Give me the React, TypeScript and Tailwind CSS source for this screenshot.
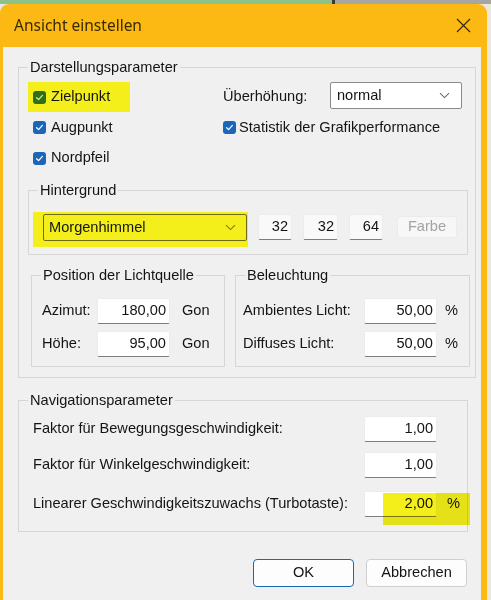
import type { ReactNode } from "react";

function Check({ green }: { green?: boolean }) {
  return (
    <span
      className={
        "flex h-[13px] w-[13px] shrink-0 items-center justify-center rounded-[3px] " +
        (green ? "bg-[#2f6f1c]" : "bg-[#1a66b8]")
      }
    >
      <svg width="9" height="9" viewBox="0 0 9 9" fill="none">
        <path
          d="M1.6 4.7 L3.6 6.6 L7.4 2.4"
          stroke={green ? "#d9f07a" : "#ffffff"}
          strokeWidth="1.3"
          strokeLinecap="round"
          strokeLinejoin="round"
        />
      </svg>
    </span>
  );
}

function Chevron({ color }: { color: string }) {
  return (
    <svg width="11" height="7" viewBox="0 0 11 7" fill="none">
      <path d="M1 1.2 L5.5 5.6 L10 1.2" stroke={color} strokeWidth="1.1" />
    </svg>
  );
}

function Field({ value, w, bg = "bg-white" }: { value: string; w: string; bg?: string }) {
  return (
    <div
      className={
        "flex h-[26px] items-center justify-end rounded-[2px] border border-[#ececec] border-b-[#7d7d7d] pr-[3px] " +
        w +
        " " +
        bg
      }
    >
      {value}
    </div>
  );
}

function Group({ title, className, children }: { title: string; className: string; children: ReactNode }) {
  return (
    <fieldset className={"border border-[#d6d6d6] " + className}>
      <legend className="ml-[9px] px-[2px] leading-[16px]">{title}</legend>
      {children}
    </fieldset>
  );
}

export default function App() {
  return (
    <div className="flex h-[600px] w-[491px] flex-col overflow-hidden bg-[#ece8dc] font-['Liberation_Sans',Arial,sans-serif] text-[14.6px] text-[#141414]">
      <div className="flex h-[4px] shrink-0">
        <div className="w-[332px] bg-[#8cc28a]" />
        <div className="w-[3px] bg-[#3a3a3a]" />
        <div className="flex-1 bg-[#a6a6a2]" />
      </div>
      <div className="flex w-[487px] flex-1 flex-col rounded-t-[9px] bg-[#fdb913] pl-[3px] pr-[6px]">
        <div className="flex h-[43px] shrink-0 items-center justify-between pl-[11px] pr-[10px]">
          <span className="font-['Noto_Sans',sans-serif] text-[15.5px] text-[#3a2a00]">Ansicht einstellen</span>
          <svg width="15" height="15" viewBox="0 0 15 15" fill="none">
            <path d="M1 1 L14 14 M14 1 L1 14" stroke="#3a2a00" strokeWidth="1.2" />
          </svg>
        </div>

        <div className="relative flex-1 bg-[#f0f0f0]">
          <Group title="Darstellungsparameter" className="ml-[15px] mt-[12px] w-[458px]">
            <div className="pb-[10px] pl-[9px] pt-[7px]">
              <div className="flex h-[30px] items-center">
                <div className="w-[195px]">
                  <div className="flex h-[30px] w-[102px] items-center gap-[5px] bg-[#f4ef1a] pl-[5px]">
                    <Check green />
                    <span>Zielpunkt</span>
                  </div>
                </div>
                <span className="w-[107px]">Überhöhung:</span>
                <div className="mb-[3px] flex h-[27px] w-[132px] items-center justify-between rounded-[2px] border border-[#8a8a8a] bg-white pl-[6px] pr-[11px]">
                  <span>normal</span>
                  <Chevron color="#6a6a6a" />
                </div>
              </div>
              <div className="flex h-[31px] items-center">
                <div className="flex w-[195px] items-center gap-[5px] pl-[5px]">
                  <Check />
                  <span>Augpunkt</span>
                </div>
                <div className="flex items-center gap-[3px]">
                  <Check />
                  <span>Statistik der Grafikperformance</span>
                </div>
              </div>
              <div className="flex h-[30px] items-center gap-[5px] pl-[5px]">
                <Check />
                <span>Nordpfeil</span>
              </div>

              <Group title="Hintergrund" className="mt-[9px] w-[440px]">
                <div className="flex items-start pb-[7px] pl-[4px] pt-[14px]">
                  <div className="h-[35px] w-[215px] bg-[#f4ef1a] pt-[2px]">
                    <div className="ml-[10px] flex h-[27px] w-[204px] items-center justify-between rounded-[2px] border border-[#6f6a18] pl-[5px] pr-[10px]">
                      <span>Morgenhimmel</span>
                      <Chevron color="#7a7620" />
                    </div>
                  </div>
                  <div className="ml-[10px] mt-[2px]">
                    <Field value="32" w="w-[34px]" bg="bg-[#f9f9f9]" />
                  </div>
                  <div className="ml-[11px] mt-[2px]">
                    <Field value="32" w="w-[35px]" bg="bg-[#f9f9f9]" />
                  </div>
                  <div className="ml-[11px] mt-[2px]">
                    <Field value="64" w="w-[34px]" bg="bg-[#f9f9f9]" />
                  </div>
                  <div className="ml-[14px] mt-[4px] flex h-[22px] w-[60px] items-center justify-center rounded-[3px] border border-[#ebebeb] bg-[#f7f7f7] text-[#a3a3a3]">
                    Farbe
                  </div>
                </div>
              </Group>

              <div className="mt-[12px] flex">
                <Group title="Position der Lichtquelle" className="ml-[3px] w-[194px]">
                  <div className="pb-[9px] pl-[10px] pt-[15px]">
                    <div className="flex h-[26px] items-center">
                      <span className="w-[55px]">Azimut:</span>
                      <Field value="180,00" w="w-[73px]" />
                      <span className="ml-[12px]">Gon</span>
                    </div>
                    <div className="mt-[7px] flex h-[26px] items-center">
                      <span className="w-[55px]">Höhe:</span>
                      <Field value="95,00" w="w-[73px]" />
                      <span className="ml-[12px]">Gon</span>
                    </div>
                  </div>
                </Group>
                <Group title="Beleuchtung" className="ml-[10px] w-[235px]">
                  <div className="pb-[9px] pl-[7px] pt-[15px]">
                    <div className="flex h-[26px] items-center">
                      <span className="w-[121px]">Ambientes Licht:</span>
                      <Field value="50,00" w="w-[73px]" />
                      <span className="ml-[8px]">%</span>
                    </div>
                    <div className="mt-[7px] flex h-[26px] items-center">
                      <span className="w-[121px]">Diffuses Licht:</span>
                      <Field value="50,00" w="w-[73px]" />
                      <span className="ml-[8px]">%</span>
                    </div>
                  </div>
                </Group>
              </div>
            </div>
          </Group>

          <Group title="Navigationsparameter" className="ml-[15px] mt-[14px] w-[450px]">
            <div className="relative pb-[14px] pl-[14px] pt-[8px]">
              <div className="flex h-[26px] items-center">
                <span className="w-[331px]">Faktor für Bewegungsgeschwindigkeit:</span>
                <Field value="1,00" w="w-[73px]" />
              </div>
              <div className="mt-[10px] flex h-[26px] items-center">
                <span className="w-[331px]">Faktor für Winkelgeschwindigkeit:</span>
                <Field value="1,00" w="w-[73px]" />
              </div>
              <div className="mt-[13px] flex h-[26px] items-center">
                <span className="w-[331px]">Linearer Geschwindigkeitszuwachs (Turbotaste):</span>
                <Field value="2,00" w="w-[73px]" />
                <span className="ml-[10px]">%</span>
              </div>
              <div className="pointer-events-none absolute bottom-[6px] left-[364px] h-[32px] w-[87px] bg-[#f4ef1a] mix-blend-multiply" />
            </div>
          </Group>

          <div className="mt-[27px] flex justify-end gap-[12px] pr-[14px]">
            <div className="flex h-[28px] w-[101px] items-center justify-center rounded-[4px] border border-[#1a66b8] bg-[#fdfdfd]">
              OK
            </div>
            <div className="flex h-[28px] w-[101px] items-center justify-center rounded-[4px] border border-[#cfcfcf] bg-[#fdfdfd]">
              Abbrechen
            </div>
          </div>
        </div>
      </div>
    </div>
  );
}
